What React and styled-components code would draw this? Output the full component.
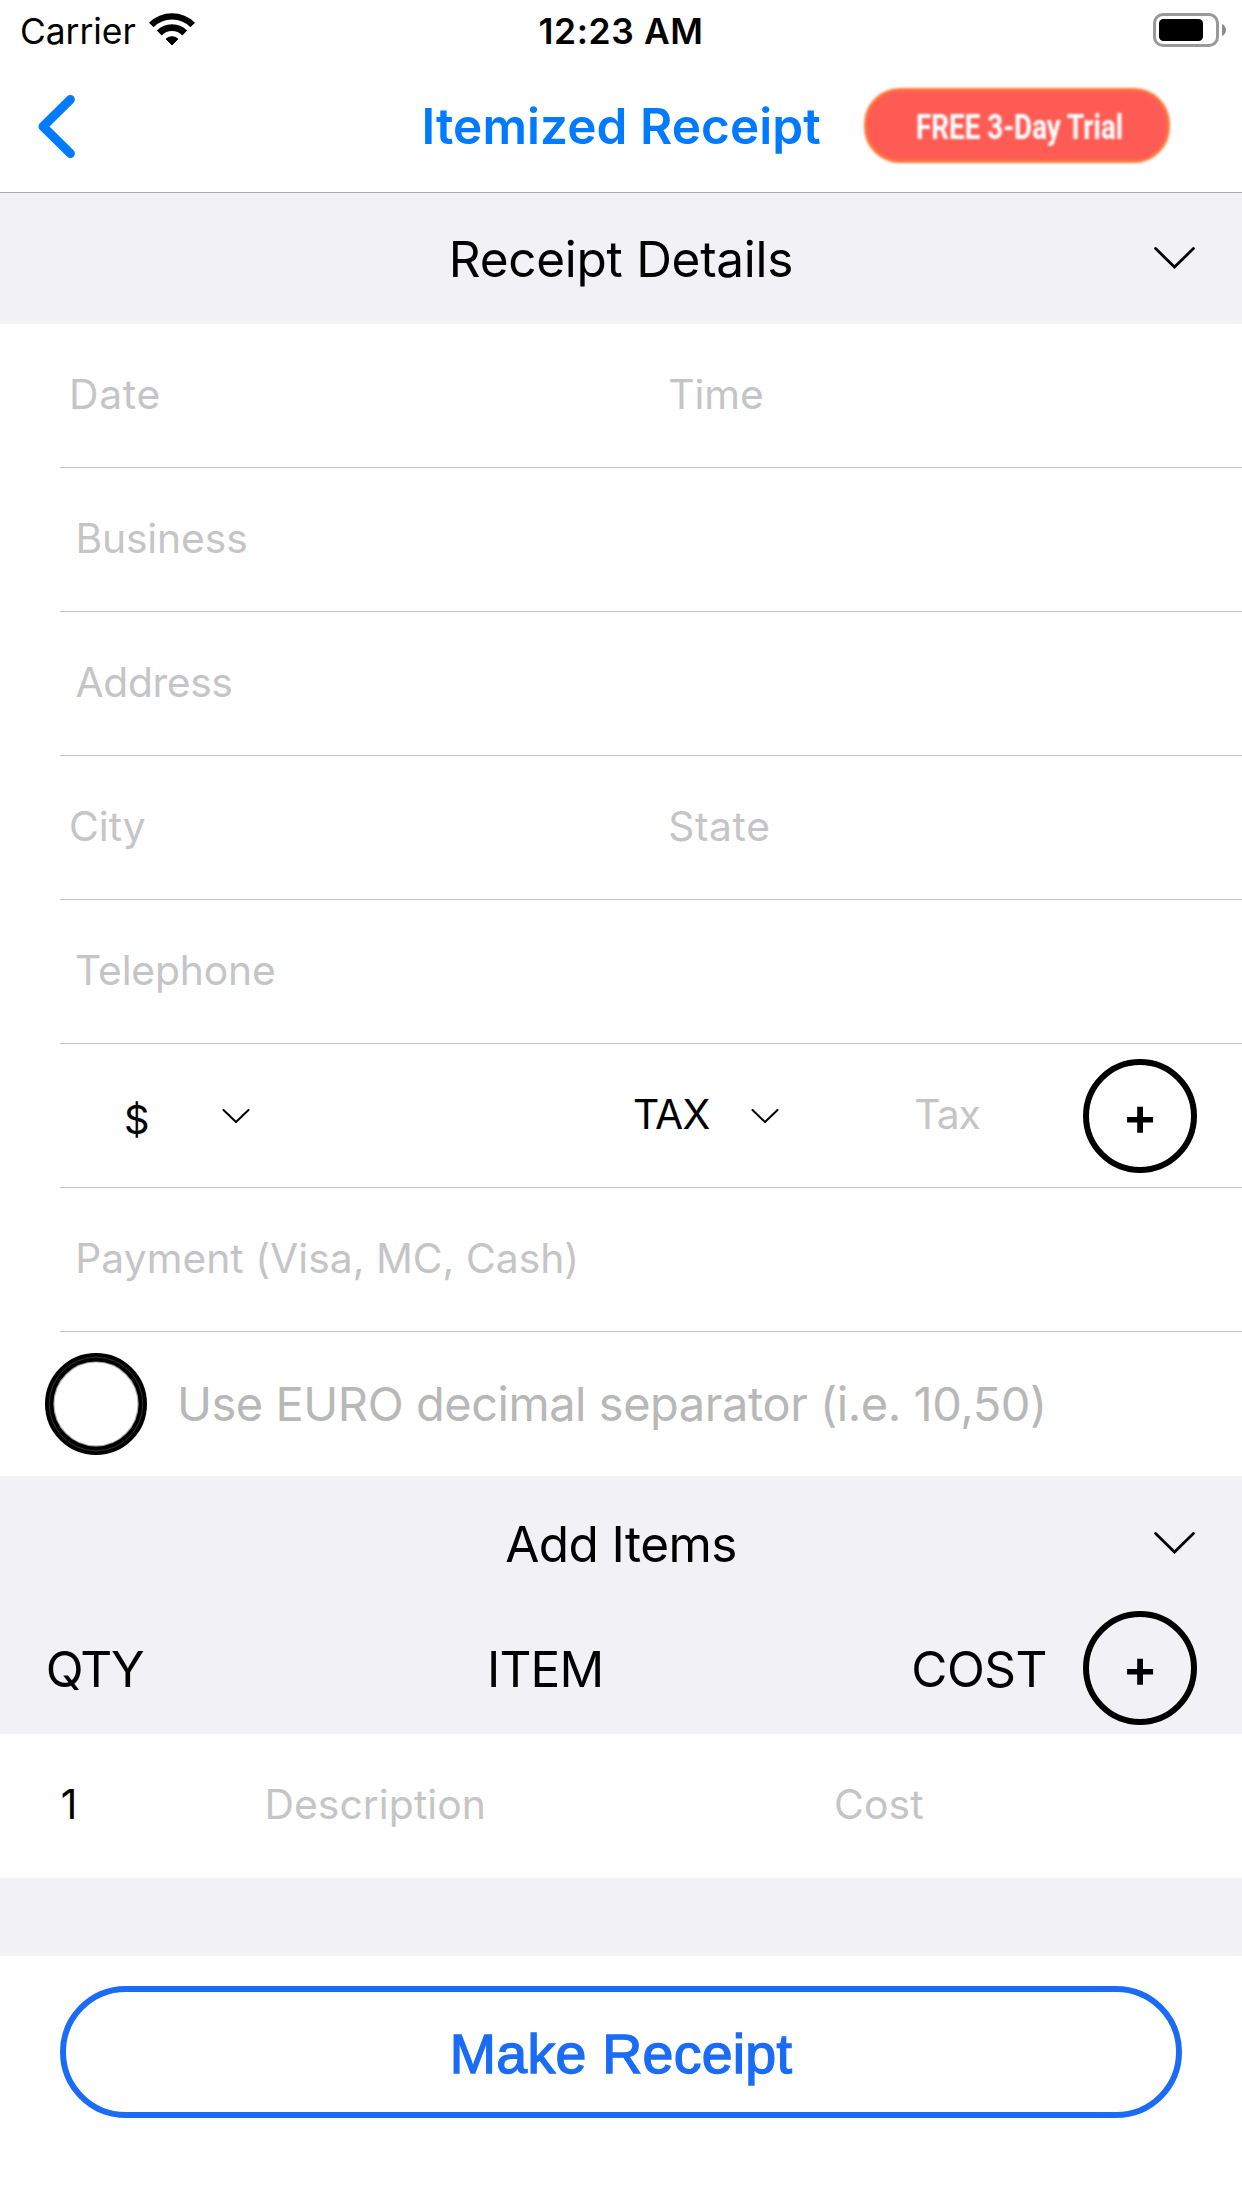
import React from 'react';
import styled, { createGlobalStyle } from 'styled-components';

const colors = {
  tint: '#007aff',
  action: '#1b6cf5',
  grouped: '#f2f1f6',
  hairline: '#c6c6c8',
  placeholder: '#c5c5c7',
  hint: '#b8b8b8',
};

const GlobalStyle = createGlobalStyle`
  *, *::before, *::after { box-sizing: border-box; }
  body {
    margin: 0;
    background: #fff;
    color: #000;
    font-family: Inter, "Liberation Sans", sans-serif;
    font-size: 40.8px;
  }
`;

const Screen = styled.main`
  display: flex;
  flex-direction: column;
  width: 1242px;
  height: 2208px;
  overflow: hidden;
  background: #fff;
  white-space: nowrap;
`;

const StatusBar = styled.header`
  display: grid;
  grid-template-columns: 149px 389px 615px 1fr;
  height: 60px;
  font-size: 35.4px;
  line-height: 63px;

  svg { margin-top: 13px; display: block; }
`;

const Carrier = styled.span`
  padding-left: 20px;
  letter-spacing: -0.05px;
`;

const Clock = styled.span`
  padding-left: 0.5px;
  font-weight: 600;
  letter-spacing: 0.6px;
`;

const NavBar = styled.nav`
  display: grid;
  grid-template-columns: 38px 383.6px 442.9px 1fr;
  height: 133px;
  border-bottom: 1px solid #a9a9ad;
`;

const BackButton = styled.button`
  grid-column: 2;
  justify-self: start;
  align-self: start;
  margin-top: 34px;
  padding: 0;
  border: 0;
  background: none;
  line-height: 0;
`;

const NavTitle = styled.h1`
  margin: 0;
  font-size: 49.5px;
  font-weight: 600;
  line-height: 132px;
  letter-spacing: 0.05px;
  color: ${colors.tint};
`;

const TrialBadge = styled.button`
  display: flex;
  justify-content: center;
  align-items: center;
  width: 306px;
  height: 75px;
  margin-top: 27.5px;
  padding: 3px 0 0 4px;
  border: 3px solid #ff7a3c;
  border-radius: 36px;
  background: #ff5b55;
  filter: blur(1px);

  span {
    font: 700 34.5px Roboto, sans-serif;
    line-height: 40px;
    color: #fff;
    transform: scaleX(0.806);
  }
`;

const SectionHeader = styled.div`
  display: grid;
  grid-template-columns: 88px 1fr 88px;
  grid-template-rows: ${(p) => p.$height - 1}px;
  flex: none;
  align-items: center;
  height: ${(p) => p.$height}px;
  background: ${colors.grouped};
`;

const SectionTitle = styled.h2`
  grid-column: 2;
  align-self: start;
  margin: 0;
  text-align: center;
  font-size: 49.5px;
  font-weight: 400;
  line-height: ${(p) => p.$line}px;
  letter-spacing: ${(p) => p.$track}px;
`;

const Row = styled.div`
  display: grid;
  grid-template-columns: ${(p) => p.$cols || '1fr'};
  grid-template-rows: 144px;
  flex: none;
  height: 144px;
  margin-left: 60px;
  border-bottom: ${(p) => (p.$last ? '0' : `1px solid ${colors.hairline}`)};
  line-height: 141px;

  svg, button { align-self: center; }
`;

const Field = styled.span`
  padding-left: ${(p) => p.$inset || 0}px;
  letter-spacing: ${(p) => p.$track || 0}px;
  color: ${(p) => (p.$value ? '#000' : colors.placeholder)};
`;

const Currency = styled(Field)`
  font-size: 39.8px;
  line-height: 151px;
`;

const RoundButton = styled.button`
  display: flex;
  justify-content: center;
  align-items: center;
  width: 114px;
  height: 114px;
  padding: 0;
  border: 6px solid #000;
  border-radius: 50%;
  background: none;
  color: #000;
  font: 600 53px Inter, sans-serif;
  line-height: 102px;
`;

const OptionRow = styled.label`
  display: flex;
  flex: none;
  align-items: center;
  gap: 30px;
  height: 144px;
  padding-left: 45px;
  font-size: 47px;
  line-height: 144px;
  letter-spacing: -0.46px;
  color: ${colors.hint};
`;

const ColumnHeads = styled.div`
  display: grid;
  grid-template-columns: 441.2px 424.3px 171.7px 114px;
  flex: none;
  height: 124px;
  padding: 1px 0 0 45.8px;
  background: ${colors.grouped};
  font-size: 49.5px;
  line-height: 116px;
`;

const Head = styled.span`
  letter-spacing: ${(p) => p.$track}px;
`;

const Spacer = styled.div`
  flex: none;
  height: 78px;
  background: ${colors.grouped};
`;

const Footer = styled.footer`
  padding: 30px 60px 0;
`;

const MakeButton = styled.button`
  display: block;
  width: 100%;
  height: 132px;
  padding: 3px 0 0;
  border: 6px solid ${colors.action};
  border-radius: 66px;
  background: #fff;
  color: ${colors.action};
  font: 400 55.5px "Liberation Sans", sans-serif;
  letter-spacing: 0.25px;
  -webkit-text-stroke: 1.4px ${colors.action};
`;

const WifiIcon = () => (
  <svg width="46" height="33" viewBox="0 0 46 33" fill="none" stroke="#000">
    <path d="M2.3 12A29.25 29.25 0 0 1 43.7 12" strokeWidth="6.4" />
    <path d="M10.3 20A17.9 17.9 0 0 1 35.7 20" strokeWidth="6.8" />
    <path d="M23 32L17 26A9 9 0 0 1 29 26Z" fill="#000" strokeWidth="1" strokeLinejoin="round" />
  </svg>
);

const BatteryIcon = () => (
  <svg width="74" height="34" viewBox="0 0 74 34">
    <rect x="1.5" y="1.5" width="63" height="31" rx="8.5" fill="none" stroke="#999" strokeWidth="3" />
    <rect x="6" y="6" width="44" height="22" rx="4.5" />
    <path d="M69 11C74.3 13 74.3 21 69 23Z" fill="#8c8c8c" />
  </svg>
);

const BackIcon = () => (
  <svg width="38" height="64" viewBox="0 0 38 64" fill="none">
    <path
      d="M32.4 5.5L5 32.5L32.4 59.5"
      stroke={colors.tint}
      strokeWidth="9"
      strokeLinecap="round"
      strokeLinejoin="round"
    />
  </svg>
);

const Chevron = ({ large }) =>
  large ? (
    <svg width="41" height="22" viewBox="0 0 41 22" fill="none">
      <path d="M1.6 1.6L20.5 20L39.4 1.6" stroke="#000" strokeWidth="2.8" strokeLinecap="round" />
    </svg>
  ) : (
    <svg width="28" height="14" viewBox="0 0 28 14" fill="none">
      <path d="M1.5 1L14 13L26.500 1" stroke="#000" strokeWidth="2" strokeLinecap="round" />
    </svg>
  );

const RadioIcon = () => (
  <svg width="102" height="102" viewBox="0 0 102 102" fill="none">
    <circle cx="51" cy="51" r="42.2" stroke="#000" strokeOpacity="0.35" strokeWidth="1.4" />
    <circle cx="51" cy="51" r="46.8" stroke="#000" strokeWidth="8.4" />
    <circle cx="51" cy="51" r="46.8" stroke="#555" strokeWidth="0.6" />
  </svg>
);

export default function App() {
  return (
    <Screen>
      <GlobalStyle />
      <StatusBar>
        <Carrier>Carrier</Carrier>
        <WifiIcon />
        <Clock>12:23 AM</Clock>
        <BatteryIcon />
      </StatusBar>
      <NavBar>
        <BackButton aria-label="Back"><BackIcon /></BackButton>
        <NavTitle>Itemized Receipt</NavTitle>
        <TrialBadge><span>FREE 3-Day Trial</span></TrialBadge>
      </NavBar>

      <SectionHeader $height={131}>
        <SectionTitle $line={132} $track={-0.28}>Receipt Details</SectionTitle>
        <Chevron large />
      </SectionHeader>
      <Row $cols="600px 1fr">
        <Field $inset={9} $track={0.7}>Date</Field>
        <Field $inset={8.3} $track={-0.1}>Time</Field>
      </Row>
      <Row><Field $inset={15.4} $track={-0.13}>Business</Field></Row>
      <Row><Field $inset={15.6} $track={-0.4}>Address</Field></Row>
      <Row $cols="600px 1fr">
        <Field $inset={9} $track={0}>City</Field>
        <Field $inset={8.2} $track={0.6}>State</Field>
      </Row>
      <Row><Field $inset={15.1} $track={-0.18}>Telephone</Field></Row>
      <Row $cols="162px 411px 118.4px 162.9px 168.7px 114px">
        <Currency $value $inset={64}>$</Currency>
        <Chevron />
        <Field $value $track={-0.8}>TAX</Field>
        <Chevron />
        <Field $track={-1}>Tax</Field>
        <RoundButton aria-label="Add tax">+</RoundButton>
      </Row>
      <Row><Field $inset={15.3} $track={0.02}>Payment (Visa, MC, Cash)</Field></Row>
      <OptionRow>
        <RadioIcon />
        <span>Use EURO decimal separator (i.e. 10,50)</span>
      </OptionRow>

      <SectionHeader $height={134}>
        <SectionTitle $line={136} $track={-0.6}>Add Items</SectionTitle>
        <Chevron large />
      </SectionHeader>
      <ColumnHeads>
        <Head $track={-2}>QTY</Head>
        <Head $track={-0.85}>ITEM</Head>
        <Head $track={-0.55}>COST</Head>
        <RoundButton aria-label="Add item">+</RoundButton>
      </ColumnHeads>
      <Row $last $cols="204.4px 569.6px 1fr">
        <Field $value $inset={0.8}>1</Field>
        <Field $track={0.08}>Description</Field>
        <Field $track={0.15}>Cost</Field>
      </Row>
      <Spacer />

      <Footer>
        <MakeButton>Make Receipt</MakeButton>
      </Footer>
    </Screen>
  );
}
